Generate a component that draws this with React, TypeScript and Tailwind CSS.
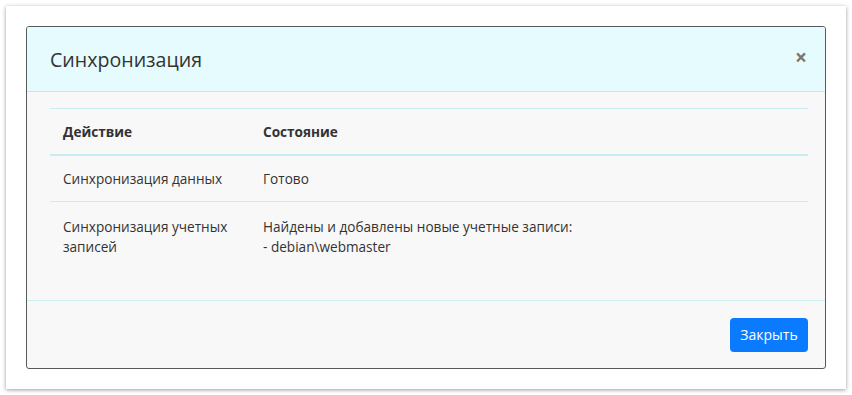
import React from 'react';

const rows = [
	{ action: 'Синхронизация данных', status: ['Готово'] },
	{
		action: 'Синхронизация учетных записей',
		status: ['Найдены и добавлены новые учетные записи:', '- debian\\webmaster'],
	},
];

const App: React.FC = () => {
	return (
		<div
			className="w-[852px] h-[395px] bg-white pt-[6px] pl-[6px]"
			style={{ fontFamily: '"Open Sans", "Noto Sans", sans-serif' }}
		>
			<div className="w-[840px] h-[383px] bg-white p-5 shadow-[0_1px_4px_rgba(0,0,0,0.4)]">
				{/* Modal window */}
				<div className="w-[800px] h-[343px] flex flex-col border border-[#595959] rounded-[3px] overflow-hidden bg-[#f8f8f8]">
					<div className="h-[65px] shrink-0 flex items-center justify-between pl-[23px] pr-[18px] bg-[#e5fbfd] border-b border-[#dedede]">
						<h5 className="text-[19.6px] text-[#333] leading-none pt-[1px]">Синхронизация</h5>
						<span className="text-[21px] font-bold leading-none text-[#777] pb-[3px]">×</span>
					</div>

					<div className="flex-1 pt-4 pl-[23px] pr-[17px]">
						<table className="w-full text-[13.6px] text-[#333] border-t border-[#c9eef1]">
							<thead>
								<tr className="border-b-2 border-[#c6edf0]">
									<th className="w-[200px] h-[46px] px-[13px] pt-[1px] text-left font-bold">Действие</th>
									<th className="px-[13px] pt-[1px] text-left font-bold">Состояние</th>
								</tr>
							</thead>
							<tbody>
								<tr className="border-b border-[#e2e2e2]">
									<td className="px-[13px] pt-[13px] pb-[12px] align-top leading-[20px]">{rows[0].action}</td>
									<td className="px-[13px] pt-[13px] pb-[12px] align-top leading-[20px]">{rows[0].status[0]}</td>
								</tr>
								<tr>
									<td className="px-[13px] pt-[15px] pb-[12px] align-top leading-[20px]">{rows[1].action}</td>
									<td className="px-[13px] pt-[15px] pb-[12px] align-top leading-[20px]">
										{rows[1].status.map((line) => (
											<div key={line}>{line}</div>
										))}
									</td>
								</tr>
							</tbody>
						</table>
					</div>

					<div className="h-[68px] shrink-0 flex items-center justify-end pr-[17px] border-t border-[#cdeff2]">
						<button className="h-[34px] w-[78px] rounded-[4px] bg-[#0a7bff] text-white text-[14px]">
							Закрыть
						</button>
					</div>
				</div>
			</div>
		</div>
	);
};

export default App;
